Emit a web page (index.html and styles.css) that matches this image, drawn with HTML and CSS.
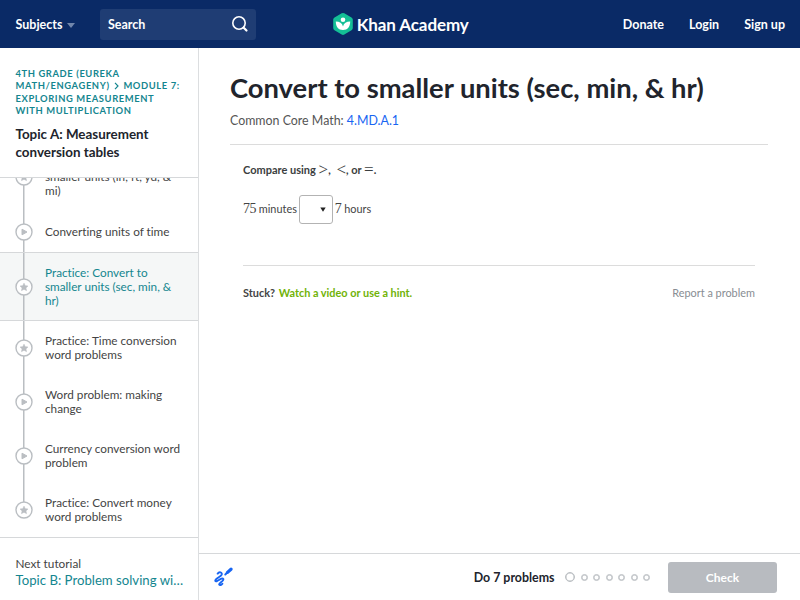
FILE: index.html
```html
<!DOCTYPE html>
<html lang="en">
<head>
  <meta charset="UTF-8" />
  <meta name="viewport" content="width=device-width, initial-scale=1.0"/>
  <title>Convert to smaller units (sec, min, &amp; hr) | Khan Academy</title>
  <link rel="stylesheet" href="styles.css">
</head>
<body>

<!-- Shared icons -->
<svg class="sprite" width="0" height="0">
  <symbol id="play" viewBox="0 0 18 18">
    <circle cx="9" cy="9" r="8" fill="#fff" stroke="#babec2" stroke-width="1.4"/>
    <path d="M7 6.200v5.600l5-2.800z" fill="#babec2" stroke="#babec2" stroke-width="1" stroke-linejoin="round"/>
  </symbol>
  <symbol id="star" viewBox="0 0 18 18">
    <circle cx="9" cy="9" r="8" fill="#fff" stroke="#babec2" stroke-width="1.4"/>
    <path d="M9 5.200l1.200 2.500 2.700.3-2 1.900.6 2.700L9 11.300l-2.500 1.300.6-2.700-2-1.900 2.700-.3z" fill="#babec2" stroke="#babec2" stroke-width=".6" stroke-linejoin="round"/>
  </symbol>
</svg>

<header>
  <div class="header-left">
    <a class="subjects" href="#">Subjects <span class="caret"></span></a>
    <div class="search">
      <span>Search</span>
      <svg width="18" height="18" viewBox="0 0 18 18" fill="none" stroke="#fff" stroke-linecap="round">
        <circle cx="8" cy="8" r="6.200" stroke-width="1.600"/>
        <path d="M12.700 12.700l2.800 2.800" stroke-width="2.200"/>
      </svg>
    </div>
  </div>
  <a class="logo" href="#">
    <svg width="22" height="24" viewBox="0 0 22 24">
      <path d="M9.700 1.300a2.600 2.600 0 0 1 2.600 0l7.200 4.100a2.600 2.600 0 0 1 1.300 2.200v8.500a2.600 2.600 0 0 1-1.300 2.200l-7.200 4.200a2.600 2.600 0 0 1-2.600 0l-7.200-4.200a2.600 2.600 0 0 1-1.300-2.200V7.600a2.600 2.600 0 0 1 1.300-2.200z" fill="#14bf96"/>
      <circle cx="11" cy="7.800" r="2.300" fill="#fff"/>
      <path d="M3.800 9.600c3.800 0 6.500 1.600 7.200 4.800.7-3.200 3.400-4.800 7.200-4.800 0 5-2.600 8.500-7.200 8.500s-7.200-3.500-7.200-8.500z" fill="#fff"/>
    </svg>
    <span>Khan Academy</span>
  </a>
  <nav>
    <a href="#">Donate</a>
    <a href="#">Login</a>
    <a href="#">Sign up</a>
  </nav>
</header>

<div class="page">
  <aside>
    <div class="topic">
      <div class="breadcrumb">4th grade (Eureka<br>Math/EngageNY) <svg width="5" height="8" viewBox="0 0 5 8"><path d="M1 .8L4 4 1 7.200" fill="none" stroke="#14868f" stroke-width="1.200"/></svg> Module 7:<br>Exploring measurement<br>with multiplication</div>
      <h2>Topic A: Measurement conversion tables</h2>
    </div>

    <ul class="lessons">
      <li><div class="marker"><svg><use href="#star"/></svg></div><p>Practice: Convert to smaller units (in, ft, yd, &amp; mi)</p></li>
      <li class="single"><div class="marker"><svg><use href="#play"/></svg></div><p>Converting units of time</p></li>
      <li class="active"><div class="marker"><svg><use href="#star"/></svg></div><p>Practice: Convert to smaller units (sec, min, &amp; hr)</p></li>
      <li><div class="marker"><svg><use href="#star"/></svg></div><p>Practice: Time conversion word problems</p></li>
      <li><div class="marker"><svg><use href="#play"/></svg></div><p>Word problem: making change</p></li>
      <li><div class="marker"><svg><use href="#play"/></svg></div><p>Currency conversion word problem</p></li>
      <li><div class="marker"><svg><use href="#star"/></svg></div><p>Practice: Convert money word problems</p></li>
    </ul>

    <div class="next">
      <div>Next tutorial</div>
      <a href="#">Topic B: Problem solving wi…</a>
    </div>
  </aside>

  <main>
    <div class="content">
      <h1>Convert to smaller units (sec, min, &amp; hr)</h1>
      <p class="standard">Common Core Math: <a href="#">4.MD.A.1</a></p>

      <div class="exercise">
        <p class="question">Compare using <span class="math">&gt;</span>, <span class="math lt">&lt;</span>, or <span class="math">=</span>.</p>
        <div class="answer">
          <span><span class="math num">75</span> minutes</span>
          <button class="dropdown"><svg width="6" height="5" viewBox="0 0 6 5"><path d="M.3.5h5.400L3 4.800z" fill="#222"/></svg></button>
          <span><span class="math num">7</span> hours</span>
        </div>
        <div class="help">
          <span class="stuck">Stuck? <a href="#">Watch a video or use a hint.</a></span>
          <a class="report" href="#">Report a problem</a>
        </div>
      </div>
    </div>

    <footer>
      <svg class="scratchpad" width="20" height="20" viewBox="0 0 20 20" fill="none" stroke="#1865f2" stroke-linecap="round" stroke-linejoin="round">
        <path d="M13.500 5.400L17 2.200" stroke-width="3.200"/>
        <path d="M11.300 7.500l1.500-1.400" stroke-width="2"/>
        <path d="M3.700 6.600C5.200 4.400 8.400 5.200 7.700 7.600 6.800 10 .6 11.500 1.300 13.900c1 2.300 6.500-4.300 8-1.900 1 2.200-4.800 3.500-4.100 5.500.6 1.200 2.400.4 3.200-.8" stroke-width="1.900"/>
      </svg>
      <span class="goal">Do 7 problems</span>
      <div class="dots">
        <i class="current"></i><i></i><i></i><i></i><i></i><i></i><i></i>
      </div>
      <button class="check">Check</button>
    </footer>
  </main>
</div>

</body>
</html>
```

FILE: styles.css
```css
* {
  box-sizing: border-box;
}

body {
  font-family: Lato, 'Liberation Sans', sans-serif;
  font-variant-ligatures: none;
  color: #21242c;
  margin: 0;
  height: 600px;
  display: flex;
  flex-direction: column;
  overflow: hidden;
}

a {
  text-decoration: none;
}

h1, h2, p, ul {
  margin: 0;
  padding: 0;
}

.sprite {
  position: absolute;
}

header {
  background-color: #0a2a66;
  height: 48px;
  padding: 0 15px 0 15.500px;
  display: grid;
  grid-template-columns: 1fr auto 1fr;
  align-items: center;
  font-size: 12.500px;
  font-weight: bold;
}

header a {
  color: #fff;
}

.header-left {
  display: flex;
  align-items: center;
  gap: 25px;
}

.subjects {
  display: flex;
  align-items: center;
  gap: 4.500px;
}

.caret {
  border: 4px solid transparent;
  border-top: 5px solid #7186ab;
  border-bottom: none;
  margin-top: 2px;
}

.search {
  width: 156px;
  height: 31px;
  padding: 0 7px 0 8px;
  border-radius: 3px;
  background-color: #1f3d74;
  color: #fff;
  display: flex;
  align-items: center;
  justify-content: space-between;
}

.logo {
  display: flex;
  align-items: center;
  gap: 3px;
  font-size: 17px;
  letter-spacing: -0.1px;
}

nav {
  display: flex;
  justify-content: flex-end;
  gap: 25px;
}

.page {
  flex: 1;
  min-height: 0;
  display: flex;
}

aside {
  width: 199px;
  border-right: 1px solid #dcdee0;
  display: flex;
  flex-direction: column;
}

.topic {
  height: 130px;
  padding: 19.500px 14px 0 15.500px;
  border-bottom: 1px solid #d6d8da;
}

.breadcrumb {
  color: #14868f;
  font-size: 9.400px;
  font-weight: bold;
  line-height: 12.500px;
  letter-spacing: 0.600px;
  text-transform: uppercase;
  white-space: nowrap;
}

.breadcrumb svg {
  margin: 0 1.500px;
  vertical-align: -1px;
}

.topic h2 {
  font-size: 13.400px;
  line-height: 18px;
  margin-top: 7.500px;
}

.lessons {
  list-style: none;
  flex: 1;
  min-height: 0;
  overflow: hidden;
  display: flex;
  flex-direction: column;
  justify-content: flex-end;
}

.lessons li {
  display: flex;
  flex-shrink: 0;
  padding-left: 15px;
  font-size: 11.750px;
  line-height: 14px;
  color: #444;
}

.lessons p {
  width: 138px;
  padding: 13px 0;
}

.lessons .single p {
  padding-top: 14px;
}

.marker {
  width: 18px;
  margin-right: 12px;
  display: flex;
  align-items: center;
  background: linear-gradient(#babec2, #babec2) center / 1.500px 100% no-repeat;
}

.lessons li:last-child .marker {
  background-position: top;
  background-size: 1.500px 50%;
}

.marker svg {
  width: 18px;
  height: 18px;
}

.lessons .active {
  color: #14868f;
  background-color: #f5f7f7;
  border-top: 1px solid #d6d8da;
  border-bottom: 1px solid #d6d8da;
}

/* the two borders take up part of the row's padding */
.active p {
  padding-bottom: 12px;
}

.next {
  height: 63px;
  padding: 18px 14px 0 15.500px;
  border-top: 1px solid #d6d8da;
  font-size: 11.800px;
  line-height: 16px;
  color: #444;
  white-space: nowrap;
}

.next a {
  font-size: 13.200px;
  color: #14868f;
}

main {
  flex: 1;
  display: flex;
  flex-direction: column;
}

.content {
  flex: 1;
  padding: 22px 32px 0 31px;
}

h1 {
  font-size: 27.350px;
  line-height: 36px;
}

.standard {
  margin-top: 6px;
  font-size: 12.400px;
  line-height: 18px;
  color: #555;
}

.standard a {
  color: #1865f2;
}

.exercise {
  margin-top: 14px;
  padding: 0 13px;
  border-top: 1px solid #dcdcdc;
}

.question {
  margin-top: 16px;
  font-size: 11px;
  line-height: 17px;
  height: 19px;
  font-weight: bold;
  color: #3b3e40;
}

.math {
  font-family: 'Liberation Serif', serif;
  font-size: 17px;
  font-weight: normal;
  line-height: 1;
  vertical-align: -1px;
}

.math.lt {
  margin-left: 3px;
}

.answer {
  margin-top: 15px;
  display: flex;
  align-items: center;
  gap: 2px;
  font-size: 10.900px;
  line-height: 16px;
  color: #444;
}

.answer > span {
  padding-bottom: 2px;
}

.math.num {
  font-size: 14px;
  letter-spacing: -0.500px;
  vertical-align: baseline;
}

.dropdown {
  width: 34px;
  height: 29px;
  padding: 0 6px 0 0;
  display: flex;
  align-items: center;
  justify-content: flex-end;
  background-color: #fff;
  border: 1px solid #b3b3b3;
  border-radius: 3px;
}

.help {
  margin-top: 41px;
  padding-top: 19px;
  border-top: 1px solid #dcdcdc;
  display: flex;
  justify-content: space-between;
  font-size: 10.900px;
  line-height: 16px;
}

.stuck {
  font-weight: bold;
  color: #444;
}

.stuck a {
  margin-left: 1px;
  color: #71b307;
}

.report {
  color: #888d93;
}

footer {
  height: 47px;
  padding: 0 23px 0 15px;
  border-top: 1px solid #d6d8da;
  display: flex;
  align-items: center;
}

.goal {
  margin-left: auto;
  font-size: 12.400px;
  font-weight: bold;
}

.dots {
  display: flex;
  align-items: center;
  gap: 5.500px;
  margin: 0 18px 0 10.500px;
}

.dots i {
  width: 7px;
  height: 7px;
  border: 1.800px solid #babec2;
  border-radius: 50%;
  box-shadow: inset 0 0 0 0.500px #babec2;
}

.dots .current {
  width: 10px;
  height: 10px;
}

.check {
  width: 109px;
  height: 31px;
  border: none;
  border-radius: 3px;
  background-color: #b8bbc0;
  color: #fff;
  font: bold 12px Lato, sans-serif;
}
```
